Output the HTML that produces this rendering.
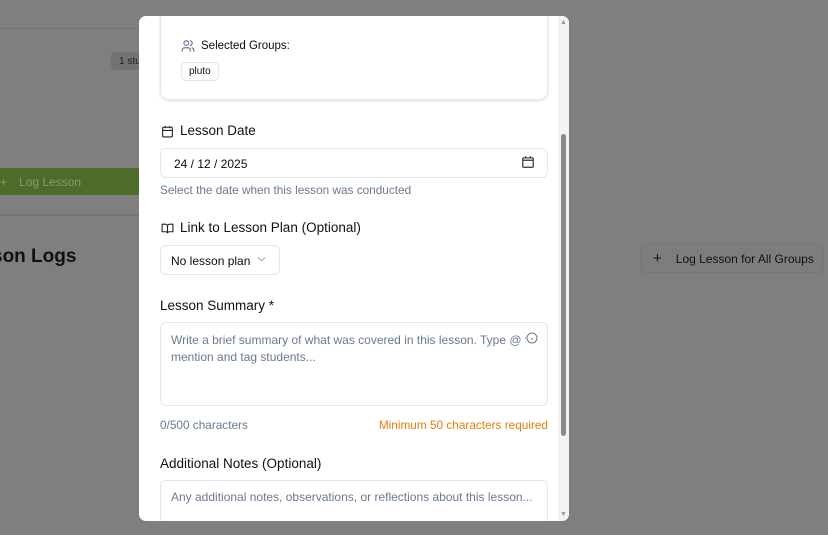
<!DOCTYPE html>
<html><head><meta charset="utf-8"><style>
*{box-sizing:border-box;margin:0;padding:0}
body{width:828px;height:535px;overflow:hidden;background:#7f7f7f;font-family:"Liberation Sans",sans-serif;position:relative;color:#0b0b0b}
.abs{position:absolute;white-space:nowrap}
.modal{left:139px;top:16px;width:430px;height:505px;background:#fff;border-radius:7px;overflow:hidden}
.lbl{font-size:13.5px;color:#111}
.inp{border:1px solid #e3e7ee;border-radius:6px;background:#fff}
.hint{font-size:11.8px;color:#6a7891}
</style></head><body>
<div class="abs" style="left:0;top:28px;width:139px;height:1px;background:#747474"></div>
<div class="abs" style="left:111px;top:52px;width:30px;height:18px;background:#727272;border-radius:4px;font-size:10px;padding:4px 0 0 8px;color:#222">1 stu</div>
<div class="abs" style="left:0;top:168px;width:139px;height:27px;background:#4e6b2a;font-size:12px;color:#8a9a70;padding:7px 0 0 0"><span style="margin-right:12px">+</span>Log Lesson</div>
<div class="abs" style="left:0;top:214px;width:139px;height:2px;background:#747474"></div>
<div class="abs" style="left:-8px;top:246px;font-size:19px;font-weight:bold;color:#111">son Logs</div>
<div class="abs" style="left:640px;top:243px;width:184px;height:30px;border:1px solid #777;border-radius:5px;background:#7d7d7d;font-size:12px;color:#111;padding:8px 0 0 12px"><span style="margin-right:14px;font-size:15px;line-height:12px">+</span>Log Lesson for All Groups</div>

<div class="abs modal">
  <div class="abs" style="left:21px;top:-10px;width:388px;height:94px;border:1px solid #e6e8ec;border-radius:9px;box-shadow:0 1px 3px rgba(0,0,0,.12)"></div>
  <svg class="abs" style="left:42px;top:23px" width="14" height="14" viewBox="0 0 24 24" fill="none" stroke="#6a7891" stroke-width="2" stroke-linecap="round"><circle cx="9" cy="7" r="4"/><path d="M2 21v-2a4 4 0 0 1 4-4h6a4 4 0 0 1 4 4v2M16 3.1a4 4 0 0 1 0 7.8M22 21v-2a4 4 0 0 0-3-3.9"/></svg>
  <div class="abs" style="left:62px;top:24px;font-size:11.5px">Selected Groups:</div>
  <div class="abs" style="left:42px;top:46px;border:1px solid #dfe3ea;border-radius:5px;font-size:10px;padding:3px 7px">pluto</div>

  <svg class="abs" style="left:22px;top:109px" width="13" height="13" viewBox="0 0 24 24" fill="none" stroke="#222" stroke-width="2"><rect x="3" y="4" width="18" height="18" rx="2"/><path d="M16 2v4M8 2v4M3 10h18"/></svg>
  <div class="abs lbl" style="left:41px;top:107px">Lesson Date</div>
  <div class="abs inp" style="left:21px;top:132px;width:388px;height:30px;font-size:12px;padding:8px 13px">24 / 12 / 2025</div>
  <svg class="abs" style="left:382px;top:139px" width="14" height="14" viewBox="0 0 24 24" fill="none" stroke="#333" stroke-width="2"><rect x="3" y="5" width="18" height="16" rx="1"/><path d="M8 2v4M16 2v4M3 9h18"/></svg>
  <div class="abs hint" style="left:21px;top:167px">Select the date when this lesson was conducted</div>

  <svg class="abs" style="left:22px;top:206px" width="13" height="13" viewBox="0 0 24 24" fill="none" stroke="#222" stroke-width="2"><path d="M2 4h6a4 4 0 0 1 4 4v13a3 3 0 0 0-3-3H2zM22 4h-6a4 4 0 0 0-4 4v13a3 3 0 0 1 3-3h7z"/></svg>
  <div class="abs lbl" style="left:41px;top:204px">Link to Lesson Plan (Optional)</div>
  <div class="abs inp" style="left:21px;top:229px;width:120px;height:30px;font-size:12px;padding:8px 10px">No lesson plan</div>
  <svg class="abs" style="left:118px;top:240px" width="9" height="6" viewBox="0 0 10 6" fill="none" stroke="#aaa" stroke-width="1.2"><path d="M1 1l4 4 4-4"/></svg>

  <div class="abs lbl" style="left:21px;top:282px">Lesson Summary *</div>
  <div class="abs inp" style="left:21px;top:306px;width:388px;height:84px;font-size:12px;color:#6a7891;padding:9px 10px;line-height:17px">Write a brief summary of what was covered in this lesson. Type @ to<br>mention and tag students...</div>
  <svg class="abs" style="left:387px;top:316px;background:#fff" width="12" height="12" viewBox="0 0 24 24" fill="none" stroke="#6a7891" stroke-width="2"><circle cx="12" cy="12" r="10"/><path d="M12 16v-4M12 8h0"/></svg>
  <div class="abs hint" style="left:21px;top:402px">0/500 characters</div>
  <div class="abs" style="right:21px;top:402px;font-size:11.8px;color:#e77d0f">Minimum 50 characters required</div>

  <div class="abs lbl" style="left:21px;top:440px">Additional Notes (Optional)</div>
  <div class="abs inp" style="left:21px;top:464px;width:388px;height:60px;font-size:12px;color:#6a7891;padding:9px 10px">Any additional notes, observations, or reflections about this lesson...</div>

  <div class="abs" style="left:419px;top:0;width:11px;height:505px;background:#f3f3f3"></div>
  <div class="abs" style="left:422px;top:118px;width:5px;height:302px;background:#8a8a8a;border-radius:3px"></div>
  <div class="abs" style="left:421px;top:3px;font-size:7px;color:#999">&#9650;</div>
  <div class="abs" style="left:421px;top:495px;font-size:7px;color:#999">&#9660;</div>
</div>
</body></html>
